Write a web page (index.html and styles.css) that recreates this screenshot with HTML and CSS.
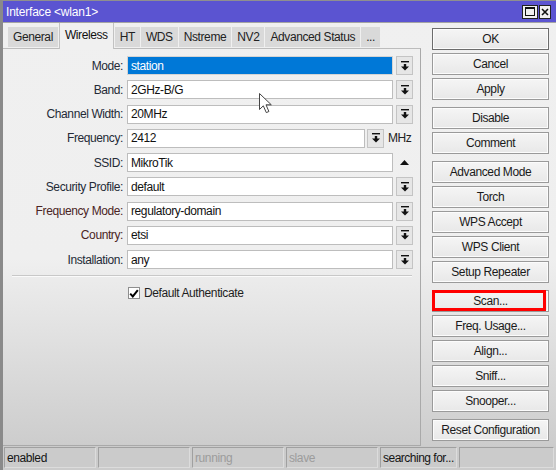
FILE: index.html
```html
<!DOCTYPE html>
<html>
<head>
<meta charset="utf-8">
<link rel="stylesheet" href="styles.css">
</head>
<body>
<div class="win">
  <div class="titlebar">
    <span class="title">Interface &lt;wlan1&gt;</span>
    <div class="tbtns">
      <span class="tb tb-max"><span class="maxicon"></span></span>
      <span class="tb tb-close"><svg width="8" height="8" viewBox="0 0 8 8"><path d="M1 1L7 7M7 1L1 7" stroke="#111" stroke-width="1.6"/></svg></span>
    </div>
  </div>
  <div class="main">
    <div class="left">
      <div class="tabs">
        <span class="tab">General</span>
        <span class="tab active">Wireless</span>
        <span class="tab">HT</span>
        <span class="tab">WDS</span>
        <span class="tab">Nstreme</span>
        <span class="tab">NV2</span>
        <span class="tab">Advanced Status</span>
        <span class="tab">...</span>
      </div>
      <div class="panel">
        <div class="form">
          <div class="row"><span class="lbl">Mode:</span><span class="field sel">station</span><span class="dd"><svg class="ddi" width="8" height="10" viewBox="0 0 8 10"><rect x="0" y="0" width="8" height="1.4"/><rect x="2.8" y="3" width="2.4" height="3"/><path d="M0 5.5H8L4 9.5Z"/></svg></span></div>
          <div class="row"><span class="lbl">Band:</span><span class="field">2GHz-B/G</span><span class="dd"><svg class="ddi" width="8" height="10" viewBox="0 0 8 10"><rect x="0" y="0" width="8" height="1.4"/><rect x="2.8" y="3" width="2.4" height="3"/><path d="M0 5.5H8L4 9.5Z"/></svg></span></div>
          <div class="row"><span class="lbl">Channel Width:</span><span class="field">20MHz</span><span class="dd"><svg class="ddi" width="8" height="10" viewBox="0 0 8 10"><rect x="0" y="0" width="8" height="1.4"/><rect x="2.8" y="3" width="2.4" height="3"/><path d="M0 5.5H8L4 9.5Z"/></svg></span></div>
          <div class="row"><span class="lbl">Frequency:</span><span class="field short">2412</span><span class="dd tight"><svg class="ddi" width="8" height="10" viewBox="0 0 8 10"><rect x="0" y="0" width="8" height="1.4"/><rect x="2.8" y="3" width="2.4" height="3"/><path d="M0 5.5H8L4 9.5Z"/></svg></span><span class="unit">MHz</span></div>
          <div class="row"><span class="lbl">SSID:</span><span class="field">MikroTik</span><span class="up"><svg width="9" height="5" viewBox="0 0 9 5"><path d="M0 5H9L4.5 0Z"/></svg></span></div>
          <div class="row"><span class="lbl">Security Profile:</span><span class="field">default</span><span class="dd"><svg class="ddi" width="8" height="10" viewBox="0 0 8 10"><rect x="0" y="0" width="8" height="1.4"/><rect x="2.8" y="3" width="2.4" height="3"/><path d="M0 5.5H8L4 9.5Z"/></svg></span></div>
          <div class="row"><span class="lbl adv">Frequency Mode:</span><span class="field">regulatory-domain</span><span class="dd"><svg class="ddi" width="8" height="10" viewBox="0 0 8 10"><rect x="0" y="0" width="8" height="1.4"/><rect x="2.8" y="3" width="2.4" height="3"/><path d="M0 5.5H8L4 9.5Z"/></svg></span></div>
          <div class="row"><span class="lbl adv">Country:</span><span class="field">etsi</span><span class="dd"><svg class="ddi" width="8" height="10" viewBox="0 0 8 10"><rect x="0" y="0" width="8" height="1.4"/><rect x="2.8" y="3" width="2.4" height="3"/><path d="M0 5.5H8L4 9.5Z"/></svg></span></div>
          <div class="row"><span class="lbl">Installation:</span><span class="field">any</span><span class="dd"><svg class="ddi" width="8" height="10" viewBox="0 0 8 10"><rect x="0" y="0" width="8" height="1.4"/><rect x="2.8" y="3" width="2.4" height="3"/><path d="M0 5.5H8L4 9.5Z"/></svg></span></div>
        </div>
        <div class="sep"></div>
        <div class="check"><span class="cb"><svg width="10" height="9" viewBox="0 0 10 9"><path d="M1.2 4.6L3.8 7.4L8.8 1.2" fill="none" stroke="#000" stroke-width="2"/></svg></span><span>Default Authenticate</span></div>
      </div>
    </div>
    <div class="btns">
      <div class="grp">
        <button class="btn def">OK</button>
        <button class="btn">Cancel</button>
        <button class="btn">Apply</button>
      </div>
      <div class="grp">
        <button class="btn">Disable</button>
        <button class="btn">Comment</button>
      </div>
      <div class="grp">
        <button class="btn">Advanced Mode</button>
        <button class="btn">Torch</button>
        <button class="btn">WPS Accept</button>
        <button class="btn">WPS Client</button>
        <button class="btn">Setup Repeater</button>
      </div>
      <div class="grp">
        <button class="btn scan">Scan...<span class="mark"></span></button>
        <button class="btn">Freq. Usage...</button>
        <button class="btn">Align...</button>
        <button class="btn">Sniff...</button>
        <button class="btn">Snooper...</button>
      </div>
      <div class="grp">
        <button class="btn">Reset Configuration</button>
      </div>
    </div>
  </div>
  <div class="status">
    <span class="cell">enabled</span>
    <span class="cell"></span>
    <span class="cell dim">running</span>
    <span class="cell dim">slave</span>
    <span class="cell w77">searching for...</span>
    <span class="cell rest"></span>
  </div>
  <svg class="cursor" width="14" height="21" viewBox="0 0 14 21"><path d="M0.5 0.5L0.5 16.5L4.3 12.8L7.3 19.6L9.9 18.5L7 11.8L12.3 11.8Z" fill="#fff" stroke="#444" stroke-width="1"/></svg>
</div>
</body>
</html>
```
FILE: styles.css
```css
* { box-sizing: border-box; }

body {
  margin: 0;
  font-family: "Liberation Sans", Arial, sans-serif;
  font-size: 12px;
  letter-spacing: -0.4px;
  color: #1c1c1c;
  background: #c8c8c8;
}

.win {
  position: relative;
  width: 556px;
  height: 470px;
  display: flex;
  flex-direction: column;
  border-left: 3px solid #8a8a8a;
  border-top: 1px solid #8f8f8f;
  background: linear-gradient(#f0f0f0 0%, #efefef 55%, #c8c8c8 100%);
  overflow: hidden;
}

.titlebar {
  flex: none;
  height: 22px;
  background: #5b54d1;
  color: #fff;
  display: flex;
  align-items: center;
  justify-content: space-between;
  padding: 0 5px 0 3px;
  border-bottom: 1px solid #a4a4a4;
  letter-spacing: -0.2px;
}

.tbtns { display: flex; gap: 1px; }

.tb {
  height: 14px;
  border: 1px solid #222;
  background: #f0f0f0;
  display: flex;
  align-items: center;
  justify-content: center;
}
.tb-max { width: 16px; }
.tb-close { width: 12px; }
.maxicon {
  width: 10px;
  height: 9px;
  border: 1px solid #111;
  border-top-width: 2px;
}

.main {
  flex: 1;
  display: flex;
  min-height: 0;
}

.left {
  width: 418px;
  flex: none;
  display: flex;
  flex-direction: column;
}

.tabs {
  flex: none;
  height: 25px;
  display: flex;
  align-items: flex-end;
  gap: 1px;
  padding-left: 5px;
  position: relative;
  z-index: 1;
}

.tab {
  height: 20px;
  margin-bottom: 1px;
  padding: 0 5px;
  background: #d9d9d9;
  color: #222;
  display: flex;
  align-items: center;
  white-space: nowrap;
}

.tab.active {
  height: 26px;
  margin-bottom: -1px;
  padding: 0 5px 2px;
  background: #f0f0f0;
  border-left: 1px solid #c2c2c2;
  border-right: 1px solid #c2c2c2;
  color: #111;
}

.panel {
  flex: 1;
  border-top: 1px solid #bcbcbc;
  border-right: 1px solid #a9a9a9;
  border-bottom: 1px solid #a9a9a9;
}

.form {
  padding-top: 7px;
  display: flex;
  flex-direction: column;
  gap: 5.25px;
}

.row {
  display: flex;
  align-items: center;
  height: 19px;
}

.lbl {
  flex: none;
  width: 124px;
  padding-right: 4px;
  text-align: right;
  color: #242a36;
  white-space: nowrap;
}
.lbl.adv { color: #4a2424; }

.field {
  flex: none;
  width: 266px;
  height: 19px;
  background: #fff;
  border: 1px solid #bdbdbd;
  padding-left: 3px;
  display: flex;
  align-items: center;
  white-space: nowrap;
  color: #111;
}
.field.sel {
  background: #0078d7;
  color: #fff;
  border-color: #d4d4d4;
}
.field.short { width: 238px; }

.dd {
  flex: none;
  width: 17px;
  height: 19px;
  margin-left: 3px;
  background: #e6e6e6;
  border: 1px solid #c4c4c4;
  display: flex;
  align-items: center;
  justify-content: center;
}
.dd.tight { margin-left: 2px; }
.ddi { fill: #111; }

.unit { margin-left: 4px; color: #222; }

.up {
  flex: none;
  width: 17px;
  margin-left: 3px;
  display: flex;
  justify-content: center;
  fill: #111;
}

.sep {
  margin: 6px 8px 0 9px;
  height: 2px;
  border-top: 1px solid #c8c8c8;
  border-bottom: 1px solid #fafafa;
}

.check {
  margin-top: 9px;
  padding-left: 125px;
  display: flex;
  align-items: center;
  gap: 4px;
  color: #1e1e1e;
}

.cb {
  width: 12px;
  height: 12px;
  border: 1px solid #8e8e8e;
  background: #fff;
  display: flex;
  align-items: center;
  justify-content: center;
}

.btns {
  flex: none;
  width: 117px;
  margin-left: 11px;
  padding-top: 5px;
  display: flex;
  flex-direction: column;
  gap: 7px;
}

.grp {
  display: flex;
  flex-direction: column;
  gap: 3px;
}

.btn {
  position: relative;
  height: 22px;
  padding: 0;
  border: 1px solid #9a9a9a;
  background: linear-gradient(#f5f5f5, #e8e8e8);
  box-shadow: inset 0 0 0 1px #fcfcfc;
  font: inherit;
  letter-spacing: inherit;
  color: #1a1a1a;
  white-space: nowrap;
}
.btn.def { border-color: #6c6c6c; }

.mark {
  position: absolute;
  left: -1px;
  top: -1px;
  right: 2px;
  bottom: 0;
  border: 3px solid #f00;
}

.status {
  flex: none;
  height: 24px;
  display: flex;
  gap: 2px;
  padding: 1px 2px 2px 1px;
  background: #cbcbcb;
}

.cell {
  flex: none;
  width: 92px;
  border-top: 1px solid #a0a0a0;
  border-left: 1px solid #a0a0a0;
  border-right: 1px solid #dcdcdc;
  border-bottom: 1px solid #dcdcdc;
  padding-left: 2px;
  display: flex;
  align-items: center;
  white-space: nowrap;
  overflow: hidden;
  color: #151515;
}
.cell.dim { color: #9c9c9c; }
.cell.w77 { width: 77px; letter-spacing: -0.5px; }
.cell.rest { flex: 1; }

.cursor {
  position: absolute;
  left: 256px;
  top: 92px;
}
```
